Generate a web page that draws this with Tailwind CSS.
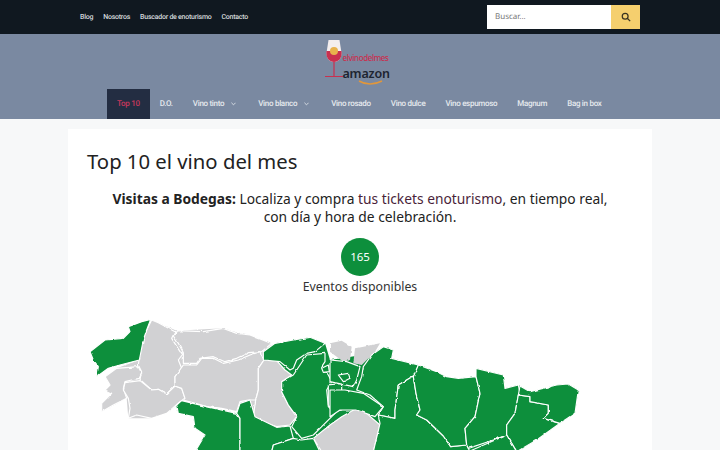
<!DOCTYPE html>
<html lang="es">
<head>
    <meta charset="UTF-8">
    <title>Top 10 el vino del mes</title>
    <script src="https://cdn.jsdelivr.net/npm/@tailwindcss/browser@4"></script>
</head>
<body class="h-[450px] overflow-hidden bg-[#f7f8f9] font-['Noto_Sans',sans-serif] text-[#222222]">
    <!-- Top bar -->
    <div class="h-[34px] bg-[#101820] flex items-center justify-between pl-[80px] pr-[80px]">
        <nav class="flex gap-[10px] font-['Roboto',sans-serif] text-[7px] tracking-[-0.24px] font-medium text-[#d5d8dc] whitespace-nowrap [text-rendering:geometricPrecision]">
            <a>Blog</a>
            <a>Nosotros</a>
            <a>Buscador de enoturismo</a>
            <a>Contacto</a>
        </nav>
        <div class="flex h-[24px] w-[153px]">
            <div class="flex-1 bg-white pl-[8px] text-[8px] leading-[24px] text-[#777777] [text-rendering:geometricPrecision]">Buscar...</div>
            <div class="w-[29px] bg-[#f5cf6e] flex items-center justify-center">
                <svg width="10" height="10" viewBox="0 0 24 24" fill="none" stroke="#3a3320" stroke-width="3"><circle cx="10" cy="10" r="7"/><path d="M15 15l7 7"/></svg>
            </div>
        </div>
    </div>

    <!-- Header -->
    <header class="h-[85px] bg-[#7a89a1] flex flex-col">
        <div class="h-[55px] flex justify-center pt-[5px]">
            <div class="relative w-[71px] h-[47px]">
                <svg class="absolute left-0 top-0" width="18" height="40" viewBox="0 0 18 40">
                    <path d="M3.500 1h11l2 13c0 6-3.500 9-7.500 9s-7.500-3-7.500-9z" fill="#f4eeee"/>
                    <path d="M1.500 12h15c1 7-3 11-7.500 11s-8.500-4-7.500-11z" fill="#c9304f"/>
                    <circle cx="9" cy="12" r="4" fill="#e8b24c"/>
                    <path d="M8.400 23h1.200v14H8.400z" fill="#c9304f"/>
                    <path d="M0 37h18v1H0z" fill="#c9304f"/>
                </svg>
                <span class="absolute left-[18px] top-[14px] text-[8px] leading-[10px] font-medium tracking-[-0.4px] text-[#c9304f] whitespace-nowrap">elvinodelmes</span>
                <span class="absolute left-[18px] top-[27px] text-[12.500px] leading-[16px] font-semibold tracking-[-0.2px] text-[#1d2430]">amazon</span>
                <svg class="absolute left-[33px] top-[41px]" width="26" height="6" viewBox="0 0 26 6" fill="none"><path d="M1 1c7 4 15 4 23 0" stroke="#e2973a" stroke-width="1.500"/></svg>
            </div>
        </div>
        <nav class="flex h-[30px] pl-[107px] font-['Roboto',sans-serif] text-[8px] tracking-[-0.3px] font-medium text-[#e6e9ee] whitespace-nowrap [text-rendering:geometricPrecision]">
            <a class="px-[10px] bg-[#232d42] text-[#c6385c] flex items-center">Top 10</a>
            <a class="px-[10px] flex items-center">D.O.</a>
            <a class="pl-[10px] pr-[12px] flex items-center gap-[7px]">Vino tinto <svg width="5" height="4" viewBox="0 0 6 4" fill="none" stroke="#e6e9ee"><path d="M.5.5 3 3 5.500.5"/></svg></a>
            <a class="pl-[10px] pr-[12px] flex items-center gap-[7px]">Vino blanco <svg width="5" height="4" viewBox="0 0 6 4" fill="none" stroke="#e6e9ee"><path d="M.5.5 3 3 5.500.5"/></svg></a>
            <a class="px-[10px] flex items-center">Vino rosado</a>
            <a class="px-[10px] flex items-center">Vino dulce</a>
            <a class="px-[10px] flex items-center">Vino espumoso</a>
            <a class="px-[10px] flex items-center">Magnum</a>
            <a class="px-[10px] flex items-center">Bag in box</a>
        </nav>
    </header>

    <!-- Content -->
    <main class="mx-[68px] mt-[10px] bg-white h-[321px] pt-[17px]">
        <h1 class="pl-[19px] text-[20.300px] leading-[30px] text-[#222222]">Top 10 el vino del mes</h1>
        <p class="mt-[14px] text-center text-[13.800px] leading-[18px] text-[#222222]">
            <b class="font-bold">Visitas a Bodegas:</b> Localiza y compra <a class="text-[#4a1f3a]">tus tickets enoturismo</a>, en tiempo real,<br>con día y hora de celebración.
        </p>
        <div class="mt-[12px] mx-auto w-[38px] h-[38px] rounded-full bg-[#0d8f3c] text-white text-[11.500px] flex items-center justify-center">165</div>
        <p class="mt-[1px] text-center text-[12.300px] leading-[20px] text-[#333333]">Eventos disponibles</p>

        <!-- Map of wine regions, drawn at 3x and scaled down -->
        <svg class="mt-[13px] ml-[12px]" width="520" height="140" viewBox="0 0 1560 420" stroke="#ffffff" stroke-width="3.500" stroke-linejoin="round">
            <defs>
                <filter id="rough" x="0" y="0" width="1560" height="420" filterUnits="userSpaceOnUse" primitiveUnits="userSpaceOnUse" color-interpolation-filters="sRGB">
                    <feTurbulence type="fractalNoise" baseFrequency="0.05" numOctaves="2" seed="4"/>
                    <feDisplacementMap in="SourceGraphic" scale="7" xChannelSelector="R" yChannelSelector="G"/>
                </filter>
            </defs>
            <g filter="url(#rough)">
                <!-- backdrops so neighbouring regions meet -->
                <polygon stroke="none" fill="#d1d1d3" points="215,30 290,62 430,55 575,100 550,150 635,195 605,215 650,320 630,345 590,350 520,320 500,275 470,305 310,270 260,310 215,325 145,325 140,265 65,305 65,280 95,250 75,240 90,225 75,200 110,175 178,150 200,60"/>
                <polygon stroke="none" fill="#0d8f3c" points="550,125 585,100 690,82 735,100 750,150 880,130 910,110 940,120 935,145 1015,165 1070,185 1100,200 1135,205 1188,200 1188,175 1270,195 1275,235 1315,225 1350,245 1430,225 1465,222 1495,240 1485,310 1440,340 1370,390 1310,425 345,425 375,375 345,355 340,320 295,310 290,285 305,272 470,310 510,270 525,320 590,352 630,345 650,320 605,215 635,195 550,150"/>
                <g fill="#d1d1d3">
                    <polygon points="215,30 235,38 285,65 275,85 300,125 310,130 295,150 305,175 285,200 285,228 260,252 235,238 215,240 180,208 185,185 175,165 185,90 200,60"/>
                    <polygon points="290,62 370,65 430,55 470,70 510,75 575,100 545,125 505,128 470,145 435,155 400,140 360,145 350,160 310,160 310,128 295,100 280,78"/>
                    <polygon points="175,170 185,190 178,205 135,215 130,235 140,265 100,285 65,305 65,280 95,250 75,240 90,225 75,200 110,175"/>
                    <polygon points="135,218 180,212 215,240 235,238 260,252 285,228 305,235 315,265 300,275 260,310 215,325 170,315 145,325 150,295 145,265 130,240"/>
                    <polygon points="310,165 350,165 365,145 400,145 430,160 475,150 510,135 540,125 552,150 535,175 535,240 527,270 505,270 480,275 470,305 425,295 380,290 310,270 315,265 305,235 285,228 285,200"/>
                    <polygon points="552,150 590,152 615,180 635,195 605,215 605,245 625,285 650,320 630,345 590,350 540,335 520,320 527,270 535,240 535,175"/>
                    <polygon points="700,385 750,345 785,320 830,295 860,310 900,345 880,425 725,425"/>
                    <polygon stroke="none" points="750,100 785,92 815,110 810,150 790,155 750,125"/>
                    <polygon stroke="none" points="825,115 900,100 885,125 845,165 820,160"/>
                </g>
                <g fill="#0d8f3c">
                    <polygon points="30,125 75,90 130,85 150,65 145,50 185,35 212,28 200,60 190,90 178,150 120,165 85,175 50,200 55,170 40,150"/>
                    <polygon points="550,125 585,100 640,90 690,82 735,100 705,125 680,130 650,150 640,175 630,180 600,155 550,150"/>
                    <polygon points="605,215 640,195 660,165 680,135 735,130 735,155 725,170 745,195 755,215 740,240 745,290 765,310 725,350 700,375 665,385 635,350 650,320 625,285 605,245"/>
                    <polygon points="290,285 305,272 380,290 470,310 480,325 480,425 345,425 375,375 345,355 340,320 295,310"/>
                    <polygon points="470,310 480,280 510,270 525,320 590,352 630,348 640,385 580,405 575,425 480,425 480,325"/>
                    <polygon points="640,385 665,390 700,385 720,425 575,425 580,405"/>
                    <polygon points="745,225 785,220 785,300 760,305 745,285"/>
                    <polygon points="725,175 745,165 748,185 730,187"/>
                    <g transform="translate(750 0)">
                        <polygon points="100,170 125,135 160,110 190,120 185,145 265,165 255,195 205,225 195,300 195,325 145,315 160,290 120,255 80,240 95,200"/>
                        <polygon points="0,150 50,155 90,170 80,210 70,230 0,215"/>
                        <polygon points="25,195 55,190 60,205 40,215"/>
                        <polygon points="250,200 258,250 270,300 260,315 290,330 340,378 362,410 410,405 420,425 130,425 150,340 145,315 195,325 195,300 205,225 255,195"/>
                        <polygon points="265,165 320,185 350,200 385,205 438,200 450,250 435,320 405,355 410,405 362,410 340,378 290,330 260,315 270,300 258,250 250,200"/>
                        <polygon points="438,175 520,195 525,235 565,225 570,250 565,255 555,310 530,345 530,375 490,390 415,415 410,405 405,355 435,320 450,250 438,200"/>
                        <polygon points="565,255 600,260 600,275 655,285 655,310 640,325 690,340 620,390 560,425 530,375 530,345 555,310"/>
                        <polygon points="570,228 600,245 680,225 715,222 745,240 735,310 690,340 640,325 655,310 655,285 600,275 600,260 565,255"/>
                        <polygon points="0,240 45,240 100,250 160,290 135,320 80,300 30,300 0,320"/>
                        <polygon points="415,425 530,375 560,425"/>
                    </g>
                </g>
            </g>
        </svg>
    </main>
</body>
</html>
